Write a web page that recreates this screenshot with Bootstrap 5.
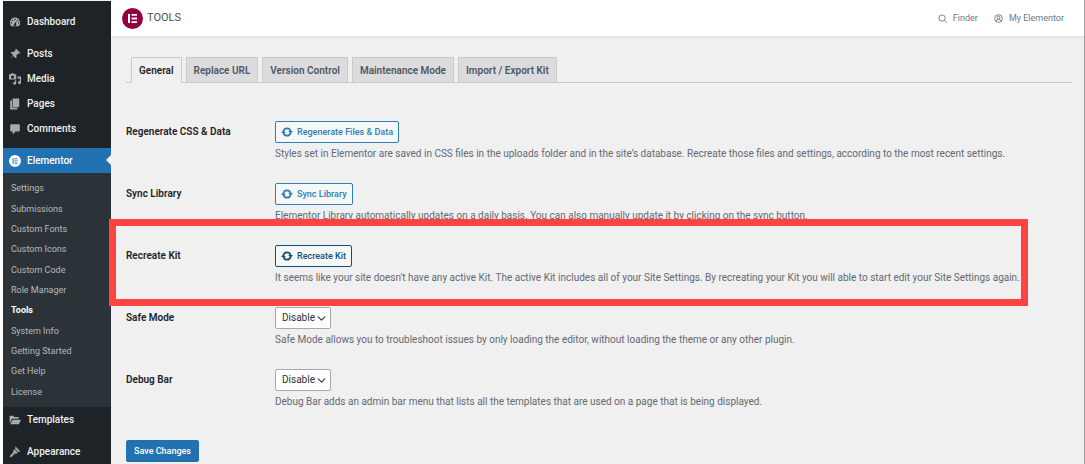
<!DOCTYPE html>
<html lang="en">
<head>
<meta charset="utf-8">
<meta name="viewport" content="width=device-width, initial-scale=1">
<title>Tools</title>
<link href="https://cdn.jsdelivr.net/npm/bootstrap@5.3.0/dist/css/bootstrap.min.css" rel="stylesheet">
<style>
body{font-family:Roboto,"Liberation Sans",sans-serif;font-size:10px;line-height:16px;color:#1d2327;background:#f0f0f1;overflow:hidden;border-left:3px solid #fff;border-right:1px solid #a0a0a2}
a{text-decoration:none}
.sidebar{width:108px;background:#1d2327;margin-top:1px;padding-top:8px}
.side-link{display:flex;align-items:center;gap:6px;height:25px;padding-left:6px;color:#f0f0f1;font-size:10px;font-weight:500}
.side-link svg{width:12px;height:12px;fill:#a7aaad;flex:none}
.side-gap{margin-top:7px}
.side-link.current{position:relative;background:#2271b1;color:#fff}
.side-link.current svg{fill:#fff}
.side-link.current::after{content:"";position:absolute;right:0;top:7px;border:5px solid transparent;border-right-color:#f0f0f1;border-left:0}
.submenu{height:234px;padding:5px 0 5px 8px;background:#2c3338;font-size:9px}
.submenu li{flex:1;display:flex;align-items:center}
.submenu a{color:#b4b9be}
.submenu a.active{color:#fff;font-weight:700}
.topbar{height:36px;padding:0 20px 0 11px;background:#fff;font-size:9px;box-shadow:0 1px 3px rgba(0,0,0,.08);color:#495157}
.topbar h1{font-size:11px;font-weight:400}
.topbar a{gap:6px;color:#6d7882}
.topbar svg{width:9px;height:9px}
.topbar .logo{width:21px;height:21px}
.content-area{padding:21px 12px 0 15px}
.tabs{border-bottom:1px solid #c9cacd;padding-left:5px;gap:4px}
.tabs .nav-link{height:26px;padding:0 7px;margin-bottom:-1px;border:1px solid #c9cacd;border-radius:0;background:#dcdcde;color:#50575e;font-weight:600;line-height:26px}
.tabs .nav-link.active{background:#f0f0f1;color:#1d2327;border-bottom-color:#f0f0f1}
.settings{margin-top:38px}
.setting{height:62px}
.setting-label{width:149px;flex:none;font-weight:600;line-height:22px}
.setting p{margin:3px 0 0;color:#646970;white-space:nowrap}
.tool-btn{--bs-btn-font-size:9px;--bs-btn-line-height:16px;--bs-btn-font-weight:500;--bs-btn-padding-x:5px;--bs-btn-padding-y:2px;--bs-btn-border-radius:2px;--bs-btn-color:#2c7fb8;--bs-btn-border-color:#2c7fb8;--bs-btn-bg:#f6f7f7;height:22px}
.tool-btn svg{width:12px;height:12px}
.tool-btn.focused{--bs-btn-color:#135078;--bs-btn-border-color:#135078}
.tool-select{width:56px;height:22px;padding:0 6px;border:1px solid #a5a8ac;border-radius:2px;font-size:10px;line-height:16px;color:#2c3338;background-position:right 4px center;background-size:9px}
.highlight{position:relative}
.highlight::after{content:"";position:absolute;inset:-26px 44px 0 -17px;height:87px;border:7px solid #ff4242;pointer-events:none}
.save-btn{--bs-btn-font-size:9px;--bs-btn-line-height:16px;--bs-btn-font-weight:500;--bs-btn-padding-x:7px;--bs-btn-padding-y:2px;--bs-btn-border-radius:2px;--bs-btn-bg:#2271b1;--bs-btn-border-color:#2271b1;margin-top:9px}
</style>
</head>
<body>
<svg class="d-none">
<symbol id="sync" viewBox="0 0 20 20"><path d="M4.200 8.500A6 6 0 0 1 15.800 8.500M15.800 11.500A6 6 0 0 1 4.200 11.500" fill="none" stroke="currentColor" stroke-width="3"/><path d="M12 8.500H20l-3.800 4.500zM8 11.500H0l3.800-4.500z" fill="currentColor"/></symbol>
</svg>
<div class="d-flex min-vh-100">
<nav class="sidebar flex-shrink-0" aria-label="Admin menu">
<a class="side-link" href="#"><svg viewBox="0 0 20 20"><path fill-rule="evenodd" d="M3.800 17h12.400A8.600 8.600 0 1 0 3.800 17zM9 4.500h2v2H9zM4.800 6.500h2v2h-2zM13.800 6.500h1.800v2h-1.800zM3 10.500h2v2H3zM15 10.500h2v2h-2zM12.800 7.500l-1.300 5.700a2 2 0 1 1-1.800-.6z"/></svg>Dashboard</a>
<a class="side-link side-gap" href="#"><svg viewBox="0 0 20 20"><path d="M11.500 1l7.500 7.500-1.600.8-2-.3-3.200 3.300.5 3.400-1.700 1.400-4-4L1 19l5.800-7.200-4-4 1.600-1.500 3.300.4L11 3.900l-.3-1.700z"/></svg>Posts</a>
<a class="side-link" href="#"><svg viewBox="0 0 20 20"><path fill-rule="evenodd" d="M1 2h2l1-1.500h4L9 2h3v9H0V2zm5 2a2.500 2.500 0 1 0 0 5 2.500 2.500 0 0 0 0-5zM14 6h6v10a2.500 2.500 0 1 1-2-2.400V9h-4zM10 12h2v5a2.500 2.500 0 1 1-2-2.400z"/></svg>Media</a>
<a class="side-link" href="#"><svg viewBox="0 0 20 20"><path d="M6 1h11v14H6zM2 4h3v12h9v3H2z"/></svg>Pages</a>
<a class="side-link" href="#"><svg viewBox="0 0 20 20"><path d="M4 2h12q2 0 2 2v8q0 2-2 2h-5l-5 5v-5H4q-2 0-2-2V4q0-2 2-2z"/></svg>Comments</a>
<a class="side-link side-gap current" href="#"><svg viewBox="0 0 20 20"><path fill-rule="evenodd" d="M10 0a10 10 0 1 1 0 20 10 10 0 0 1 0-20zM6 5.500v9h1.700v-9zM9.200 5.500v1.600H14V5.500zM9.200 9.200v1.600H14V9.200zM9.200 12.900v1.600H14v-1.600z"/></svg>Elementor</a>
<ul class="submenu list-unstyled d-flex flex-column mb-0">
<li><a href="#">Settings</a></li>
<li><a href="#">Submissions</a></li>
<li><a href="#">Custom Fonts</a></li>
<li><a href="#">Custom Icons</a></li>
<li><a href="#">Custom Code</a></li>
<li><a href="#">Role Manager</a></li>
<li><a class="active" href="#" aria-current="page">Tools</a></li>
<li><a href="#">System Info</a></li>
<li><a href="#">Getting Started</a></li>
<li><a href="#">Get Help</a></li>
<li><a href="#">License</a></li>
</ul>
<a class="side-link" href="#"><svg viewBox="0 0 20 20"><path d="M1 3h6l2 2h7v3H5l-3 6H1zM6 9.500h14L16.500 17H2z"/></svg>Templates</a>
<a class="side-link side-gap" href="#"><svg viewBox="0 0 20 20"><path d="M11 1l8 8-3.500 1-5.500-5.500zM9 5.500l5.500 5.500-2 2-2.500-.5L3 19l-2-2 6.500-7-.5-2.500z"/></svg>Appearance</a>
</nav>
<div class="flex-grow-1">
<header class="topbar d-flex align-items-center justify-content-between">
<div class="d-flex align-items-center gap-1">
<svg class="logo" viewBox="0 0 21 21"><circle cx="10.500" cy="10.500" r="10.500" fill="#93003f"/><path fill="#fff" d="M6 6h2v9H6zM9.500 6H15v1.800H9.500zM9.500 9.600H15v1.800H9.500zM9.500 13.200H15V15H9.500z"/></svg>
<h1 class="mb-0">TOOLS</h1>
</div>
<div class="d-flex gap-3">
<a class="d-flex align-items-center" href="#"><svg viewBox="0 0 10 10" fill="none" stroke="currentColor"><circle cx="4.500" cy="4.500" r="3.500"/><path d="M7 7l2.500 2.500"/></svg>Finder</a>
<a class="d-flex align-items-center" href="#"><svg viewBox="0 0 10 10" fill="none" stroke="currentColor"><circle cx="5" cy="5" r="4.300"/><circle cx="5" cy="4" r="1.600"/><path d="M2.500 8q0-2 2.500-2t2.500 2"/></svg>My Elementor</a>
</div>
</header>
<main class="content-area">
<nav class="nav tabs" aria-label="Tools sections">
<a class="nav-link active" href="#" aria-current="page">General</a>
<a class="nav-link" href="#">Replace URL</a>
<a class="nav-link" href="#">Version Control</a>
<a class="nav-link" href="#">Maintenance Mode</a>
<a class="nav-link" href="#">Import / Export Kit</a>
</nav>
<form class="settings">
<div class="setting d-flex"><div class="setting-label">Regenerate CSS &amp; Data</div><div>
<button type="button" class="btn tool-btn d-flex align-items-center gap-1"><svg aria-hidden="true"><use href="#sync"/></svg>Regenerate Files &amp; Data</button>
<p>Styles set in Elementor are saved in CSS files in the uploads folder and in the site’s database. Recreate those files and settings, according to the most recent settings.</p></div></div>
<div class="setting d-flex"><div class="setting-label">Sync Library</div><div>
<button type="button" class="btn tool-btn d-flex align-items-center gap-1"><svg aria-hidden="true"><use href="#sync"/></svg>Sync Library</button>
<p>Elementor Library automatically updates on a daily basis. You can also manually update it by clicking on the sync button.</p></div></div>
<div class="setting d-flex highlight"><div class="setting-label">Recreate Kit</div><div>
<button type="button" class="btn tool-btn focused d-flex align-items-center gap-1"><svg aria-hidden="true"><use href="#sync"/></svg>Recreate Kit</button>
<p>It seems like your site doesn't have any active Kit. The active Kit includes all of your Site Settings. By recreating your Kit you will able to start edit your Site Settings again.</p></div></div>
<div class="setting d-flex"><label class="setting-label" for="safe">Safe Mode</label><div>
<select class="form-select tool-select" id="safe"><option>Disable</option><option>Enable</option></select>
<p>Safe Mode allows you to troubleshoot issues by only loading the editor, without loading the theme or any other plugin.</p></div></div>
<div class="setting d-flex"><label class="setting-label" for="debug">Debug Bar</label><div>
<select class="form-select tool-select" id="debug"><option>Disable</option><option>Enable</option></select>
<p>Debug Bar adds an admin bar menu that lists all the templates that are used on a page that is being displayed.</p></div></div>
<button type="submit" class="btn btn-primary save-btn">Save Changes</button>
</form>
</main>
</div>
</div>
<script src="https://cdn.jsdelivr.net/npm/bootstrap@5.3.0/dist/js/bootstrap.bundle.min.js"></script>
</body>
</html>
